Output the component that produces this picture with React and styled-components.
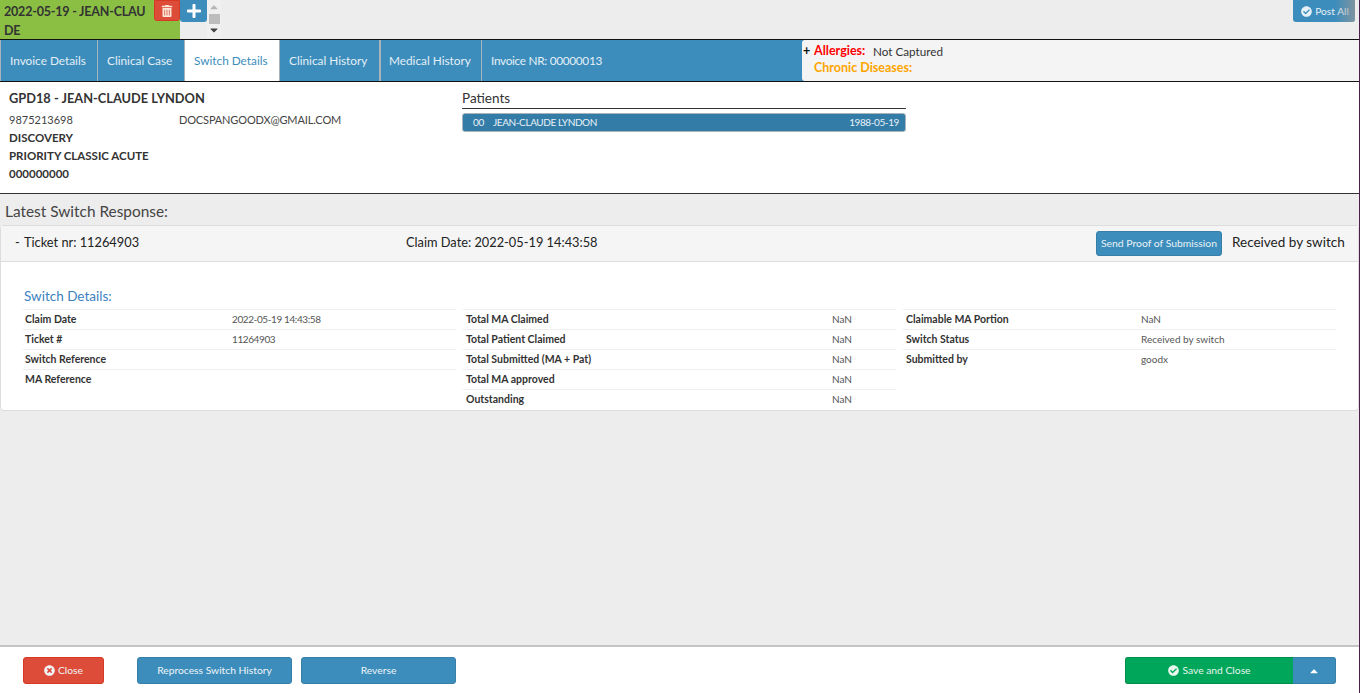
import React from "react";
import styled, { createGlobalStyle } from "styled-components";
import { FaCheckCircle, FaPlus, FaTimesCircle, FaTrashAlt, FaCaretUp, FaCaretDown } from "react-icons/fa";

const blue = "#3c8dbc";

const tabs = [
  { label: "Invoice Details", width: 97 },
  { label: "Clinical Case", width: 87 },
  { label: "Switch Details", width: 95, active: true },
  { label: "Clinical History", width: 100 },
  { label: "Medical History", width: 102, thick: true },
  { label: "Invoice NR: 00000013", width: 321, tight: true },
];

const columns = [
  {
    valueAt: 207,
    inset: 2,
    rows: [
      ["Claim Date", "2022-05-19 14:43:58"],
      ["Ticket #", "11264903"],
      ["Switch Reference", ""],
      ["MA Reference", ""],
    ],
  },
  {
    valueAt: 366,
    inset: 3,
    rows: [
      ["Total MA Claimed", "NaN"],
      ["Total Patient Claimed", "NaN"],
      ["Total Submitted (MA + Pat)", "NaN"],
      ["Total MA approved", "NaN"],
      ["Outstanding", "NaN"],
    ],
  },
  {
    valueAt: 235,
    inset: 3,
    rows: [
      ["Claimable MA Portion", "NaN"],
      ["Switch Status", "Received by switch"],
      ["Submitted by", "goodx"],
    ],
  },
];

export default function App() {
  return (
    <>
      <Global />
      <Page>
        <TopBar>
          <InvoiceTab>
            2022-05-19 - JEAN-CLAUDE
            <DeleteButton>
              <FaTrashAlt size={12} />
            </DeleteButton>
          </InvoiceTab>
          <AddButton>
            <FaPlus size={16} />
          </AddButton>
          <ScrollStrip>
            <FaCaretUp size={12} color="#b5b5b5" />
            <ScrollThumb />
            <FaCaretDown size={12} color="#444" />
          </ScrollStrip>
          <PostAll>
            <FaCheckCircle size={11} /> Post All
          </PostAll>
        </TopBar>

        <TabBar>
          {tabs.map((tab) => (
            <Tab key={tab.label} $width={tab.width} $active={tab.active} $thick={tab.thick} $tight={tab.tight}>
              {tab.label}
            </Tab>
          ))}
          <AlertPanel>
            <AlertRow>
              <Expand>+</Expand>
              <Allergies>Allergies:</Allergies>
              <AlertText>Not Captured</AlertText>
            </AlertRow>
            <AlertRow>
              <Chronic>Chronic Diseases:</Chronic>
            </AlertRow>
          </AlertPanel>
        </TabBar>

        <PatientSection>
          <Member>
            <MemberName>GPD18 - JEAN-CLAUDE LYNDON</MemberName>
            <ContactRow>
              <ContactNumber>9875213698</ContactNumber>
              <Email>DOCSPANGOODX@GMAIL.COM</Email>
            </ContactRow>
            <MemberLine>DISCOVERY</MemberLine>
            <MemberLine>PRIORITY CLASSIC ACUTE</MemberLine>
            <MemberLine>000000000</MemberLine>
          </Member>
          <Patients>
            <PatientsTitle>Patients</PatientsTitle>
            <PatientRow>
              <PatientCode>00</PatientCode>
              <PatientName>JEAN-CLAUDE LYNDON</PatientName>
              <span>1988-05-19</span>
            </PatientRow>
          </Patients>
        </PatientSection>

        <Content>
          <ResponseTitle>Latest Switch Response:</ResponseTitle>
          <Card>
            <CardHeader>
              <TicketCell>
                <Collapse>-</Collapse>
                Ticket nr: 11264903
              </TicketCell>
              <ClaimDate>Claim Date: 2022-05-19 14:43:58</ClaimDate>
              <ProofButton>Send Proof of Submission</ProofButton>
              <Status>Received by switch</Status>
            </CardHeader>
            <CardBody>
              <DetailsTitle>Switch Details:</DetailsTitle>
              <DetailsGrid>
                {columns.map((col) => (
                  <div key={col.rows[0][0]}>
                    {col.rows.map(([label, value]) => (
                      <DetailRow key={label} $valueAt={col.valueAt} $inset={col.inset}>
                        <DetailLabel>{label}</DetailLabel>
                        <DetailValue $tight={/^\d/.test(value)}>{value}</DetailValue>
                      </DetailRow>
                    ))}
                  </div>
                ))}
              </DetailsGrid>
            </CardBody>
          </Card>
        </Content>

        <Footer>
          <FooterButton $bg="#dd4b39" $edge="#d73925" $width={81}>
            <FaTimesCircle size={11} /> Close
          </FooterButton>
          <FooterButton $width={155} $gapLeft={33}>
            Reprocess Switch History
          </FooterButton>
          <FooterButton $width={155} $gapLeft={9}>
            Reverse
          </FooterButton>
          <SaveGroup>
            <SaveButton>
              <FaCheckCircle size={11} /> Save and Close
            </SaveButton>
            <CaretButton>
              <FaCaretUp size={12} />
            </CaretButton>
          </SaveGroup>
        </Footer>
      </Page>
    </>
  );
}

const Global = createGlobalStyle`
  html, body {
    margin: 0;
    padding: 0;
    height: 100%;
  }
  body {
    font-family: "Lato", "Noto Sans", sans-serif;
    color: #333;
  }
  * {
    box-sizing: border-box;
  }
`;

const Page = styled.div`
  width: 1360px;
  height: 693px;
  display: flex;
  flex-direction: column;
  background: #ededed;
  border-right: 1px solid #4b1f4f;
  overflow: hidden;
`;

const TopBar = styled.div`
  height: 39px;
  display: flex;
  align-items: flex-start;
  flex-shrink: 0;
`;

const InvoiceTab = styled.div`
  position: relative;
  width: 180px;
  height: 39px;
  padding: 2px 30px 0 4px;
  background: #8abf43;
  font-size: 12.5px;
  font-weight: 700;
  letter-spacing: -0.2px;
  line-height: 19px;
  color: #333;
  word-break: break-all;
`;

const DeleteButton = styled.div`
  position: absolute;
  top: 0;
  right: 0;
  width: 26px;
  height: 21px;
  display: flex;
  align-items: center;
  justify-content: center;
  background: #dd4b39;
  border: 1px solid #d73925;
  border-radius: 0 0 3px 3px;
  color: #fbe6d8;
`;

const AddButton = styled.div`
  width: 27px;
  height: 22px;
  display: flex;
  align-items: center;
  justify-content: center;
  background: ${blue};
  border-radius: 0 0 3px 3px;
  color: #fff;
`;

const ScrollStrip = styled.div`
  width: 14px;
  height: 39px;
  padding-top: 1px;
  display: flex;
  flex-direction: column;
  align-items: center;
  background: #f0f0f0;
`;

const ScrollThumb = styled.div`
  flex-shrink: 0;
  width: 11px;
  height: 10px;
  margin-top: 1px;
  background: #bdbdbd;
`;

const PostAll = styled.div`
  position: relative;
  margin-left: auto;
  margin-right: 4px;
  width: 62px;
  height: 22px;
  padding-left: 2px;
  display: flex;
  align-items: center;
  justify-content: center;
  gap: 3px;
  background: ${blue};
  border-radius: 0 0 3px 3px;
  color: #e6f0f6;
  font-size: 10.2px;
  overflow: hidden;

  &::after {
    content: "";
    position: absolute;
    top: 0;
    right: 0;
    bottom: 0;
    width: 20px;
    background: linear-gradient(to right, rgba(150, 150, 150, 0), rgba(150, 150, 150, 0.75));
  }
`;

const TabBar = styled.div`
  height: 43px;
  display: flex;
  flex-shrink: 0;
  background: ${blue};
  border-top: 1px solid #111;
  border-bottom: 1px solid #111;
`;

const Tab = styled.div`
  width: ${(p) => p.$width}px;
  display: flex;
  align-items: center;
  padding: 0 0 1px ${(p) => (p.$thick ? 8 : 9)}px;
  font-size: 11.8px;
  letter-spacing: ${(p) => (p.$tight ? "-0.3px" : "0")};
  color: ${(p) => (p.$active ? blue : "#e4eff6")};
  background: ${(p) => (p.$active ? "#fff" : "transparent")};
  border-left: ${(p) => (p.$thick ? 2 : 1)}px solid #a9b4ba;
`;

const AlertPanel = styled.div`
  flex: 1;
  padding: 2px 0 0 1px;
  background: #f4f4f4;
  border-radius: 3px 0 0 3px;
  font-size: 12.5px;
  line-height: 18px;
`;

const AlertRow = styled.div`
  display: flex;
  height: 17px;
  padding-left: 11px;
  position: relative;
`;

const Expand = styled.span`
  position: absolute;
  left: 0;
  color: #111;
  font-weight: 700;
`;

const Allergies = styled.span`
  width: 59px;
  color: #f00;
  font-weight: 700;
`;

const AlertText = styled.span`
  font-size: 11.7px;
`;

const Chronic = styled.span`
  color: #ffa500;
  font-weight: 700;
`;

const PatientSection = styled.div`
  height: 112px;
  display: flex;
  flex-shrink: 0;
  background: #fff;
  border-bottom: 1px solid #333;
`;

const Member = styled.div`
  width: 462px;
  padding: 7px 0 0 9px;
  font-size: 11.5px;
  line-height: 18px;
`;

const MemberName = styled.div`
  font-size: 12.8px;
  font-weight: 700;
  margin-bottom: 4px;
`;

const ContactRow = styled.div`
  display: flex;
  font-size: 11px;
  color: #444;
`;

const ContactNumber = styled.span`
  width: 170px;
`;

const Email = styled.span`
  letter-spacing: -0.15px;
`;

const MemberLine = styled.div`
  font-weight: 700;
`;

const Patients = styled.div`
  width: 444px;
  padding-top: 8px;
`;

const PatientsTitle = styled.div`
  height: 19px;
  font-size: 13.5px;
  line-height: 17px;
  border-bottom: 1px solid #333;
`;

const PatientRow = styled.div`
  height: 19px;
  margin-top: 4px;
  padding: 0 6px 1px 10px;
  display: flex;
  align-items: center;
  font-size: 10px;
  letter-spacing: -0.4px;
  color: #e8f1f6;
  background: #337ca8;
  border: 1px solid #a9b4ba;
  border-radius: 3px;
`;

const PatientCode = styled.span`
  width: 20px;
`;

const PatientName = styled.span`
  flex: 1;
`;

const Content = styled.div`
  flex: 1;
`;

const ResponseTitle = styled.div`
  padding: 9px 0 0 5px;
  height: 31px;
  font-size: 15.4px;
  line-height: 17px;
  color: #444;
`;

const Card = styled.div`
  height: 186px;
  background: #fff;
  border: 1px solid #ddd;
  border-radius: 4px;
`;

const CardHeader = styled.div`
  height: 36px;
  display: flex;
  align-items: center;
  background: #f5f5f5;
  border-bottom: 1px solid #ddd;
  font-size: 12.8px;
  color: #222;
`;

const TicketCell = styled.div`
  width: 405px;
  padding: 0 0 3px 14px;
`;

const Collapse = styled.span`
  display: inline-block;
  width: 9px;
`;

const ClaimDate = styled.div`
  flex: 1;
  padding-bottom: 3px;
`;

const ProofButton = styled.div`
  width: 126px;
  height: 25px;
  padding-bottom: 1px;
  display: flex;
  align-items: center;
  justify-content: center;
  background: ${blue};
  border: 1px solid #367fa9;
  border-radius: 3px;
  color: #e8f1f6;
  font-size: 10.4px;
`;

const Status = styled.div`
  width: 136px;
  padding: 0 0 3px 10px;
  font-size: 13.5px;
`;

const CardBody = styled.div`
  padding: 26px 23px 0 22px;
`;

const DetailsTitle = styled.div`
  height: 21px;
  padding-left: 1px;
  font-size: 13.5px;
  line-height: 17px;
  color: #3c7fbf;
`;

const DetailsGrid = styled.div`
  display: grid;
  grid-template-columns: 433px 433px 433px;
  column-gap: 7px;
`;

const DetailRow = styled.div`
  height: 20px;
  display: grid;
  grid-template-columns: ${(p) => p.$valueAt}px 1fr;
  align-items: center;
  padding: 0 0 2px ${(p) => p.$inset}px;
  border-top: 1px solid #eee;
  font-size: 10px;
  color: #555;
`;

const DetailLabel = styled.span`
  font-size: 10.5px;
  font-weight: 700;
  color: #333;
`;

const DetailValue = styled.span`
  letter-spacing: ${(p) => (p.$tight ? "-0.4px" : "0")};
`;

const Footer = styled.div`
  height: 48px;
  display: flex;
  align-items: flex-start;
  flex-shrink: 0;
  padding: 10px 23px 0;
  background: #fff;
  border-top: 2px solid #c4c4c4;
`;

const FooterButton = styled.div`
  width: ${(p) => p.$width}px;
  height: 27px;
  margin-left: ${(p) => p.$gapLeft || 0}px;
  padding-bottom: 1px;
  display: flex;
  align-items: center;
  justify-content: center;
  gap: 3px;
  background: ${(p) => p.$bg || blue};
  border: 1px solid ${(p) => p.$edge || "#367fa9"};
  border-radius: 3px;
  color: #f0f5f8;
  font-size: 10.3px;
`;

const SaveGroup = styled.div`
  margin-left: auto;
  display: flex;
  height: 27px;
`;

const SaveButton = styled.div`
  width: 168px;
  padding-bottom: 1px;
  display: flex;
  align-items: center;
  justify-content: center;
  gap: 3px;
  background: #00a65a;
  border: 1px solid #008d4c;
  border-right: 0;
  border-radius: 3px 0 0 3px;
  color: #e8f6ee;
  font-size: 10.3px;
`;

const CaretButton = styled.div`
  width: 43px;
  display: flex;
  align-items: center;
  justify-content: center;
  background: ${blue};
  border: 1px solid #367fa9;
  border-left: 0;
  border-radius: 0 3px 3px 0;
  color: #fff;
`;
